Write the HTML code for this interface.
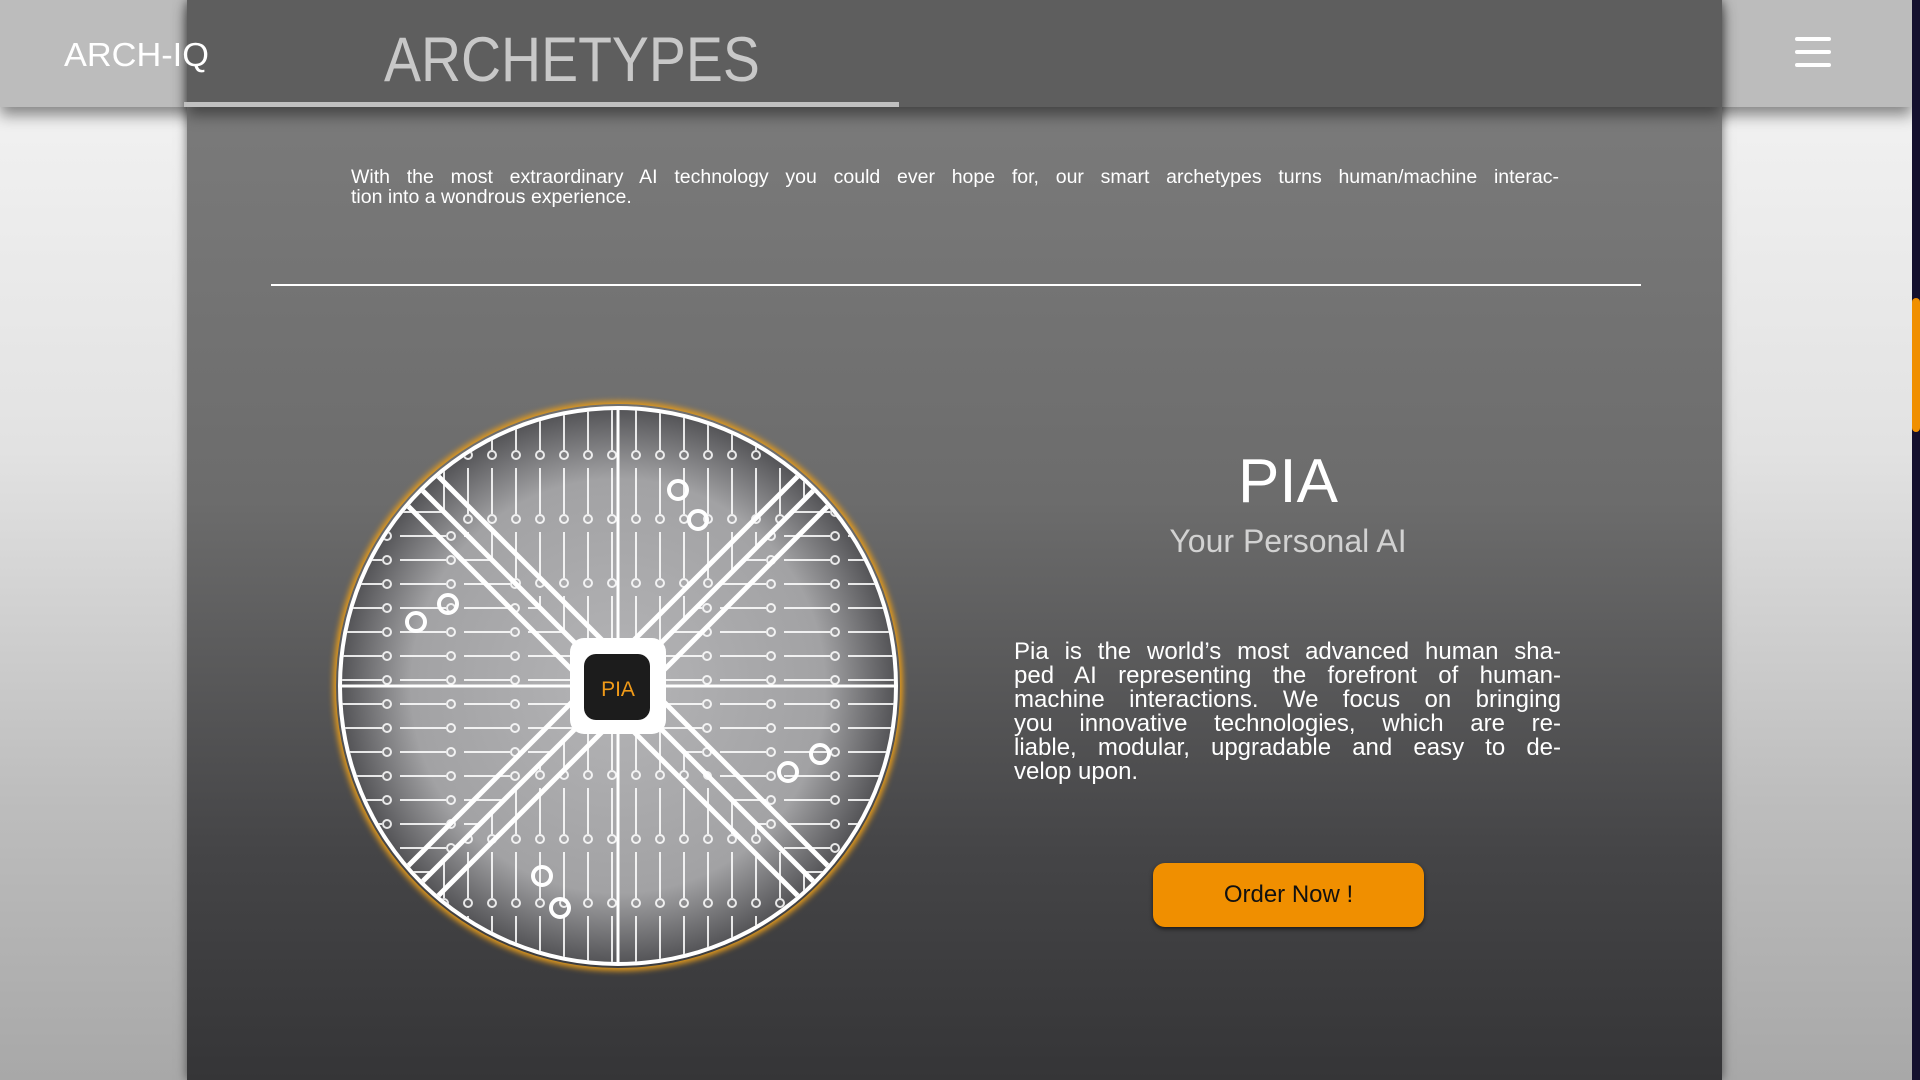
<!DOCTYPE html>
<html><head><meta charset="utf-8">
<style>
*{margin:0;padding:0;box-sizing:border-box}
html,body{width:1920px;height:1080px;overflow:hidden}
body{position:relative;font-family:"Liberation Sans",sans-serif;background:linear-gradient(#f0f0f0 130px,#e2e2e2 450px,#bdbdbd 800px,#a8a8a8 1080px)}
.side-hdr{position:absolute;left:0;top:0;width:1912px;height:107px;background:#bcbcbc;box-shadow:0 8px 14px rgba(0,0,0,.45)}
.panel{position:absolute;left:187px;top:0;width:1535px;height:1080px;background:linear-gradient(#7a7a7a 110px,#6c6c6c 500px,#454547 850px,#353537 1080px);box-shadow:0 0 10px rgba(0,0,0,.55)}
.panel-hdr{position:absolute;left:187px;top:0;width:1535px;height:107px;background:#5e5e5e;box-shadow:0 8px 14px rgba(0,0,0,.45)}
.logo{position:absolute;left:64px;top:36px;font-size:33px;color:#fff;transform-origin:0 0;transform:scaleX(1.04)}
.title{position:absolute;left:384px;top:24px;font-size:63px;color:#c8c8c8;transform-origin:0 0;transform:scaleX(0.88)}
.uline{position:absolute;left:184px;top:102px;width:715px;height:5px;background:#c0c0c0}
.ham{position:absolute;left:1795px;width:36px;height:4px;border-radius:2px;background:#fff}
.scroll{position:absolute;left:1912px;top:0;width:8px;height:1080px;background:#14102e}
.thumb{position:absolute;left:1912px;top:298px;width:8px;height:134px;border-radius:4px;background:#f08f00}
.p1{position:absolute;left:351px;top:167px;width:1208px;font-size:19.5px;line-height:20px;color:#fff}
.j{text-align:justify;text-align-last:justify;white-space:nowrap}
.div{position:absolute;left:271px;top:284px;width:1370px;height:2px;background:#fff}
.circ{position:absolute;left:336px;top:404px;width:564px;height:564px;border-radius:50%;box-shadow:0 0 6px 3px #e39a1c}
.pia{position:absolute;left:1088px;width:400px;text-align:center;top:446px;font-size:62px;color:#fff}
.sub{position:absolute;left:1088px;width:400px;text-align:center;top:523px;font-size:32px;color:#d2d2d2}
.p2{position:absolute;left:1014px;top:640px;width:547px;font-size:24px;line-height:24px;color:#fff}
.p2 div{overflow:hidden}
.btn{position:absolute;left:1153px;top:863px;width:271px;height:64px;border-radius:12px;background:#f08f00;color:#111;font-size:24px;text-align:center;line-height:64px;box-shadow:0 2px 4px rgba(0,0,0,.6)}
</style></head><body>
<div class="side-hdr"></div>
<div class="panel"></div>
<div class="panel-hdr"></div>
<div class="logo">ARCH-IQ</div>
<div class="title">ARCHETYPES</div>
<div class="uline"></div>
<div class="ham" style="top:37px"></div>
<div class="ham" style="top:50px"></div>
<div class="ham" style="top:63px"></div>
<div class="scroll"></div><div class="thumb"></div>
<div class="p1"><div class="j">With the most extraordinary AI technology you could ever hope for, our smart archetypes turns human/machine interac-</div><div>tion into a wondrous experience.</div></div>
<div class="div"></div>
<div class="circ"></div>
<svg style="position:absolute;left:336px;top:404px" width="564" height="564" viewBox="0 0 564 564">
<defs>
<radialGradient id="g" cx="50%" cy="50%" r="50%"><stop offset="0" stop-color="#b4b4b6"/><stop offset=".75" stop-color="#a2a2a4"/><stop offset="1" stop-color="#555558"/></radialGradient>
<clipPath id="c"><circle cx="282" cy="282" r="276"/></clipPath>
<pattern id="v" width="24" height="64" patternUnits="userSpaceOnUse"><line x1="12" y1="0" x2="12" y2="46" stroke="#fff" stroke-width="2"/><circle cx="12" cy="51" r="4" fill="none" stroke="#fff" stroke-width="2"/></pattern>
<pattern id="h" width="64" height="24" patternUnits="userSpaceOnUse"><line x1="0" y1="12" x2="46" y2="12" stroke="#fff" stroke-width="2"/><circle cx="51" cy="12" r="4" fill="none" stroke="#fff" stroke-width="2"/></pattern>
</defs>
<circle cx="282" cy="282" r="280" fill="#fff"/>
<circle cx="282" cy="282" r="276" fill="url(#g)"/>
<g clip-path="url(#c)">
<polygon points="0,0 564,0 282,282" fill="url(#v)" opacity=".85"/>
<polygon points="0,564 564,564 282,282" fill="url(#v)" opacity=".85"/>
<polygon points="0,0 0,564 282,282" fill="url(#h)" opacity=".85"/>
<polygon points="564,0 564,564 282,282" fill="url(#h)" opacity=".85"/>
<g stroke="#fff" stroke-width="5" fill="none">
<line x1="0" y1="0" x2="564" y2="564"/><line x1="564" y1="0" x2="0" y2="564"/>
<line x1="30" y1="0" x2="564" y2="534"/><line x1="0" y1="30" x2="534" y2="564"/>
<line x1="534" y1="0" x2="0" y2="534"/><line x1="564" y1="30" x2="30" y2="564"/>
<line x1="282" y1="0" x2="282" y2="564" stroke-width="3"/>
<line x1="0" y1="282" x2="564" y2="282" stroke-width="3"/>
</g>
<g fill="none" stroke="#fff" stroke-width="4">
<circle cx="342" cy="86" r="9"/><circle cx="362" cy="116" r="9"/>
<circle cx="80" cy="218" r="9"/><circle cx="112" cy="200" r="9"/>
<circle cx="484" cy="350" r="9"/><circle cx="452" cy="368" r="9"/>
<circle cx="206" cy="472" r="9"/><circle cx="224" cy="504" r="9"/>
</g>
</g>
<rect x="234" y="234" width="96" height="96" rx="14" fill="#fff"/>
<rect x="248" y="250" width="66" height="66" rx="12" fill="#1c1c1c"/>
<text x="282" y="292" text-anchor="middle" font-family="Liberation Sans,sans-serif" font-size="21" fill="#f09a18">PIA</text>
</svg>
<div class="pia">PIA</div>
<div class="sub">Your Personal AI</div>
<div class="p2">
<div class="j">Pia is the world’s most advanced human sha-</div>
<div class="j">ped AI representing the forefront of human-</div>
<div class="j">machine interactions. We focus on bringing</div>
<div class="j">you innovative technologies, which are re-</div>
<div class="j">liable, modular, upgradable and easy to de-</div>
<div>velop upon.</div>
</div>
<div class="btn">Order Now !</div>
</body></html>
